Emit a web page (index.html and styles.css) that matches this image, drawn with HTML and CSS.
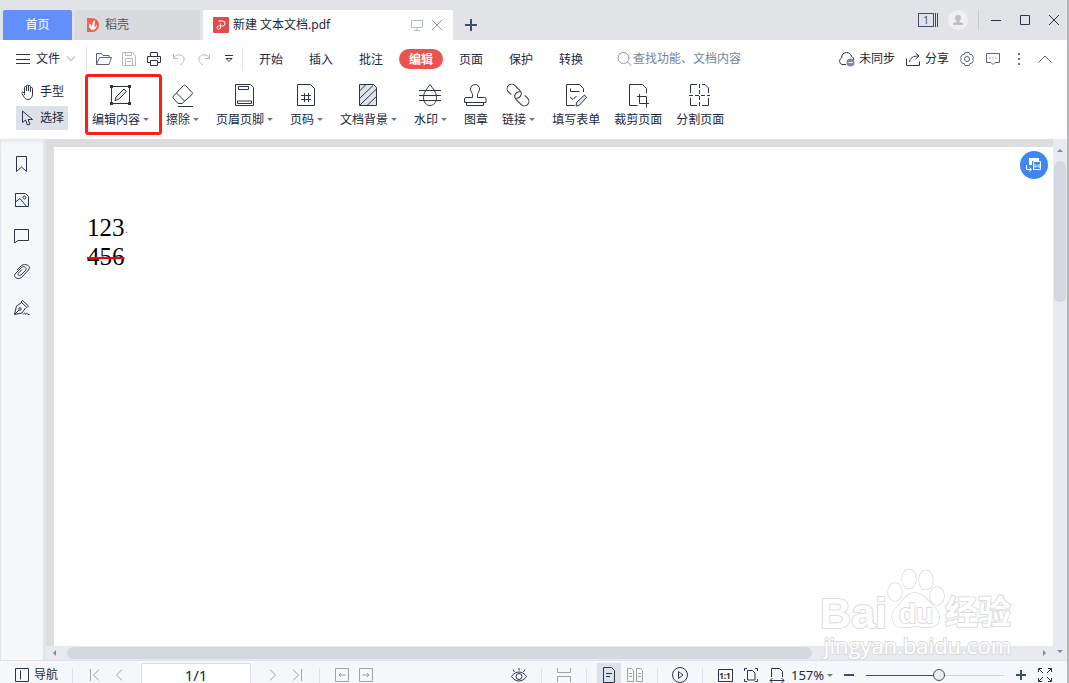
FILE: index.html
```html
<!DOCTYPE html>
<html lang="zh-CN">
<head>
  <meta charset="UTF-8">
  <meta name="viewport" content="width=device-width, initial-scale=1.0">
  <title>新建 文本文档.pdf</title>
  <link rel="stylesheet" href="styles.css">
</head>
<body>
  <header class="titlebar">
    <button class="tab home">首页</button>
    <button class="tab docer">
      <svg width="14" height="16" viewBox="0 0 14 16"><path d="M1 1h4c5 0 8 3 8 7s-3 7-7 7H1z" fill="#f2604f"/><path d="M6.500 13C3 11.500 2.500 9 3.500 6.500c1.500 1 2.300 2.500 2.500 4C6 7.500 6.500 5 8.500 3c.8 3 .5 5-.5 7.500 1-.5 2-1.500 3-3 .3 3-1.500 5-4.500 5.500z" fill="#fff"/></svg>
      稻壳
    </button>
    <div class="tab file">
      <svg width="16" height="16" viewBox="0 0 16 16"><rect width="16" height="16" rx="1" fill="#e44a4a"/><path d="M5.500 4h4a2.500 2.500 0 0 1 0 5H7.500M7.500 6.500v4a1.700 1.700 0 1 1-1.700-1.700h1.700" fill="none" stroke="#fff"/></svg>
      <span class="name">新建 文本文档.pdf</span>
      <svg class="line pale" width="12" height="12" viewBox="0 0 12 12"><path d="M.5 1.500h11v7H.5zM6 8.500v3M3 11.500h6"/></svg>
      <button class="icon small" aria-label="关闭标签"><svg class="line soft" width="12" height="12" viewBox="0 0 12 12"><path d="M1 1l10 10M11 1L1 11"/></svg></button>
    </div>
    <button class="icon add" aria-label="新建标签"><svg class="line thick" width="12" height="12" viewBox="0 0 12 12"><path d="M6 0v12M0 6h12"/></svg></button>
    <div class="window">
      <button class="icon pages-open" aria-label="窗口"><span>1</span></button>
      <button class="avatar" aria-label="登录"><svg width="20" height="20" viewBox="0 0 20 20"><circle cx="10" cy="10" r="10" fill="#f0f0f0"/><circle cx="10" cy="8" r="3" fill="#bfbfbf"/><path d="M8.500 10h3v2l3.500 1.200V15H5v-1.800L8.500 12z" fill="#bfbfbf"/></svg></button>
      <i class="rule tall"></i>
      <button class="icon" aria-label="最小化"><svg class="line" width="12" height="12" viewBox="0 0 12 12"><path d="M1 6.500h10"/></svg></button>
      <button class="icon" aria-label="最大化"><svg class="line" width="12" height="12" viewBox="0 0 12 12"><path d="M1.500 1.500h9v9h-9z"/></svg></button>
      <button class="icon" aria-label="关闭"><svg class="line" width="12" height="12" viewBox="0 0 12 12"><path d="M1 1l10 10M11 1L1 11"/></svg></button>
    </div>
  </header>

  <nav class="menubar">
    <button class="file-menu">
      <svg class="line" width="14" height="12" viewBox="0 0 14 12"><path d="M0 1.500h14M0 6.500h14M0 10.500h14"/></svg>
      文件
      <svg class="line soft" width="10" height="6" viewBox="0 0 10 6"><path d="M1 .5l4 4 4-4"/></svg>
    </button>
    <i class="rule"></i>
    <div class="quick">
      <button class="icon" aria-label="打开"><svg class="line mid" width="18" height="14" viewBox="0 0 18 14"><path d="M1.500 12.500v-11h5l1.500 2h6v2M1.500 12.500l3-7h12l-2.500 7z"/></svg></button>
      <button class="icon" aria-label="保存"><svg class="line off" width="14" height="14" viewBox="0 0 14 14"><path d="M.5.5h10l3 3v10H.5zM3.500.5v3h6v-3M3.500 13.500v-7h7v7M5 9.500h4"/></svg></button>
      <button class="icon" aria-label="打印"><svg class="line" width="14" height="14" viewBox="0 0 14 14"><path d="M3.500 4V.5h7V4M3.500 10.500h-3V4.500h13v6h-3M3.500 8.500h7v5h-7zM10 6.500h1.500"/></svg></button>
      <button class="icon" aria-label="撤销"><svg class="line off" width="14" height="14" viewBox="0 0 14 14"><path d="M1.500 2v4.500H6M1.500 6C4 2.500 8 2 10.500 4s2.500 6-2.500 9"/></svg></button>
      <button class="icon" aria-label="恢复"><svg class="line off" width="14" height="14" viewBox="0 0 14 14"><path d="M12.500 2v4.500H8M12.500 6C10 2.500 6 2 3.500 4s-2.500 6 2.500 9"/></svg></button>
      <button class="icon" aria-label="更多"><svg class="line" width="8" height="8" viewBox="0 0 8 8"><path d="M0 .5h8M1 3.500h6L4 6.500z"/></svg></button>
    </div>
    <i class="rule"></i>
    <div class="tabs">
      <button>开始</button>
      <button>插入</button>
      <button>批注</button>
      <button class="active">编辑</button>
      <button>页面</button>
      <button>保护</button>
      <button>转换</button>
    </div>
    <label class="search">
      <svg class="line soft" width="16" height="16" viewBox="0 0 16 16"><circle cx="6.500" cy="7" r="5.500"/><path d="M10.500 11l4 4"/></svg>
      <input type="text" placeholder="查找功能、文档内容" aria-label="查找功能">
    </label>
    <div class="account">
      <button class="with-text"><svg class="line" width="17" height="16" viewBox="0 0 17 16"><path d="M8 13.500H4a3.500 3.500 0 0 1-.5-6.500C3.500 3.500 6 1.500 8.500 1.500c2.500 0 4.500 1.500 5 4 1.500.5 2.500 2 2.200 3.500"/><circle cx="12.500" cy="11.500" r="4" fill="#7d8aa8" stroke="none"/><path d="M10.500 11.500h4" stroke="#fff"/></svg>未同步</button>
      <button class="with-text"><svg class="line" width="15" height="14" viewBox="0 0 15 14"><path d="M.5 6.500v7h13V9.500M3.500 10C4 6 7 4 12.500 4M9.500 1l3.500 3-3.500 3"/></svg>分享</button>
      <button class="icon" aria-label="设置"><svg class="line mid" width="14" height="14" viewBox="0 0 14 14"><path d="M5 .5h4l.8 2 2 .2 1.700 3-1 1.300 1 1.300-1.700 3-2 .2-.8 2H5l-.8-2-2-.2-1.700-3 1-1.300-1-1.300 1.700-3 2-.2z"/><circle cx="7" cy="7" r="2.500"/></svg></button>
      <button class="icon" aria-label="反馈"><svg class="line mid" width="14" height="12" viewBox="0 0 14 12"><path d="M.5.5h13v9H9l-2 2-2-2H.5zM3.500 5h1M6.500 5h1M9.500 5h1"/></svg></button>
      <button class="icon" aria-label="更多"><svg width="2" height="12" viewBox="0 0 2 12" fill="#6b7285"><path d="M0 0h2v2H0zM0 5h2v2H0zM0 10h2v2H0z"/></svg></button>
      <button class="icon" aria-label="收起"><svg class="line mid" width="14" height="8" viewBox="0 0 14 8"><path d="M.5 7.500L7 1l6.500 6.500"/></svg></button>
    </div>
  </nav>

  <section class="toolbar">
    <div class="pointer">
      <button><svg class="line" width="14" height="16" viewBox="0 0 14 16"><path d="M3.500 9V3.500a1 1 0 0 1 2 0V7 2a1 1 0 0 1 2 0v5-4.500a1 1 0 0 1 2 0V8 4.500a1 1 0 0 1 2 0V10c0 3-1.500 5.500-4.500 5.500-2.500 0-3.500-1.500-4.500-3.500L1 9.500c-.5-1.500 1-2 2.500 0V11"/></svg>手型</button>
      <button class="on"><svg class="line" width="14" height="16" viewBox="0 0 14 16"><path d="M1.500 1v11.500L4.500 10l2 5 2.500-1-2-4.500h4.500z"/></svg>选择</button>
    </div>
    <div class="tools">
      <button class="drop marked"><svg class="line" width="28" height="28" viewBox="0 0 28 28"><path d="M5.500 5.500h18v17h-18z"/><path class="tint" d="M9 19.500l1-3.500 8-8 2.500 2.500-8 8z"/><path class="dot" d="M4 4h3v3H4zM22 4h3v3h-3zM4 21h3v3H4zM22 21h3v3h-3z"/></svg><span>编辑内容</span></button>
      <button class="drop"><svg class="line" width="28" height="28" viewBox="0 0 28 28"><path d="M5.500 15l10-10.500a1.500 1.500 0 0 1 2 0l6.500 7a1.500 1.500 0 0 1 0 2L14 22.500h-4l-4.500-5a1.800 1.800 0 0 1 0-2.500zM8.500 12l8 8M10 25.500h15"/></svg><span>擦除</span></button>
      <button class="drop"><svg class="line" width="28" height="28" viewBox="0 0 28 28"><path d="M5.500 3.500h15l3 3v18h-18z"/><path d="M8.500 5.500h10v3h-10zM7.500 20h14v2.500h-14z"/></svg><span>页眉页脚</span></button>
      <button class="drop"><svg class="line" width="28" height="28" viewBox="0 0 28 28"><path d="M5.500 3.500h13l4 4v17h-17zM9 14.500h10M9 18.500h10M12.500 12v9M16.500 12v9"/></svg><span>页码</span></button>
      <button class="drop"><svg class="line" width="28" height="28" viewBox="0 0 28 28"><path class="tint" d="M5.500 3.500h14l3 3v18h-17z"/><path d="M5.500 10l6.500-6.500M5.500 17.500L19 4.500M5.500 24.500L22.500 8M13 24.500l9.500-9"/></svg><span>文档背景</span></button>
      <button class="drop"><svg class="line" width="28" height="28" viewBox="0 0 28 28"><path d="M14 3.500c-3 4-6.500 8-6.500 13 0 5 3 8 6.500 8s6.500-3 6.500-8c0-5-3.500-9-6.500-13zM3 9.500h22M3 14.500h22M3 19.500h22"/></svg><span>水印</span></button>
      <button><svg class="line" width="28" height="28" viewBox="0 0 28 28"><path d="M11.500 16.500v-3c0-1-2-3-2-5.500a4.500 4.500 0 0 1 9 0c0 2.500-2 4.500-2 5.500v3h7a1.500 1.500 0 0 1 1.500 1.500v3.500H3.500V18A1.500 1.500 0 0 1 5 16.500zM5.500 21.500v3h17v-3"/></svg><span>图章</span></button>
      <button class="drop"><svg class="line" width="28" height="28" viewBox="0 0 28 28"><g transform="rotate(45 14 14)"><path d="M9 18.500H5a4.500 4.500 0 0 1 0-9h7a4.500 4.500 0 0 1 3 8M19 9.500h4a4.500 4.500 0 0 1 0 9h-7a4.500 4.500 0 0 1-3-8"/></g></svg><span>链接</span></button>
      <button><svg class="line" width="28" height="28" viewBox="0 0 28 28"><path d="M22.500 11V7.500l-4-4h-13v21h8M9.500 7.500v3h9M9 16l3 2.500 3.500-3.500"/><path class="tint" d="M15 25l.5-3.500 8-7.500 2 2.500-7.500 8z"/></svg><span>填写表单</span></button>
      <button><svg class="line" width="28" height="28" viewBox="0 0 28 28"><path d="M23.500 12V7.500l-4-4h-13v21h8M16.500 13v9.500H26M14 15.500h9.500v11"/></svg><span>裁剪页面</span></button>
      <button><svg class="line" width="28" height="28" viewBox="0 0 28 28"><path d="M12 3.500H5.500V12M12 24.500H5.500V17M17 3.500h3l3.500 3.500v5M17 24.500h6.500V17"/><path stroke-dasharray="4 2" d="M14.500 3v22M4 14.500h21"/></svg><span>分割页面</span></button>
    </div>
  </section>

  <main class="workspace">
    <aside class="sidebar">
      <button aria-label="书签"><svg class="line" width="16" height="16" viewBox="0 0 16 16"><path d="M2.500.5h10v15l-5-4.500-5 4.500z"/></svg></button>
      <button aria-label="缩略图"><svg class="line" width="16" height="16" viewBox="0 0 16 16"><path d="M1.500 1.500h10l3 3v10h-13zM1.500 10L6 6.500l6.500 8"/><circle cx="10.500" cy="5.500" r="1.500"/></svg></button>
      <button aria-label="批注"><svg class="line" width="16" height="16" viewBox="0 0 16 16"><path d="M.5 1.500h14v11H4L.5 15z"/></svg></button>
      <button aria-label="附件"><svg class="line" width="16" height="16" viewBox="0 0 16 16"><path d="M3 6l4-4c3-3 11-1 7.500 4L8 13c-3 3-9 1-7-3l6.500-6.500c2.500-2 6 0 4 3L7 11c-1.500 1.500-4 0-2.500-2L8 5.500"/></svg></button>
      <button aria-label="签名"><svg class="line" width="16" height="16" viewBox="0 0 16 16"><path d="M8.500.5l6 5.500-1.500 1.500-6-5.500zM7 3L2.500 6 .5 14.500 8 13l3.500-5M.5 14.500L5 10M9 14.500c1.500-2 2-2 2.500 0 1-1.500 2-1.500 2.500 0h1.500"/><circle cx="6" cy="9" r="1.200"/></svg></button>
    </aside>
    <div class="viewer">
      <div class="page">
        <p>123<span class="mark">·</span></p>
        <p><del>456</del></p>
        <button class="convert" aria-label="转为Word"><svg width="16" height="16" viewBox="0 0 16 16" fill="none" stroke="#fff"><path d="M3 1h10v3H6v4H3z" fill="#fff" stroke="none"/><path d="M7.500 4.500h7v8h-7zM9 7v3.500l2-2 2 2V7M.5 8v4.500H5M3.500 10.500l2 2-2 2"/></svg></button>
        <div class="watermark">
          <div class="brand">
            <span class="latin">Bai</span>
            <span class="paw"><svg width="58" height="62" viewBox="0 0 58 62" fill="#fff" stroke="#d8d8d8" stroke-width="1.500"><ellipse cx="8" cy="24" rx="7" ry="9"/><ellipse cx="22" cy="11" rx="7" ry="9.500"/><ellipse cx="39" cy="12" rx="7" ry="9.500"/><ellipse cx="50" cy="28" rx="7" ry="9"/><path d="M28 25c-9 0-11 7-16 12-6 5-8 10-6 16 2 7 9 7 15 6 5-1 10-1 15 0 7 1 14 0 16-7 1-6-2-10-7-15-5-5-8-12-17-12z"/></svg><b>du</b></span>
            <span class="han">经验</span>
          </div>
          <div class="site">jingyan.baidu.com</div>
        </div>
      </div>
      <div class="vbar"><i class="up"></i><i class="thumb"></i><i class="down"></i></div>
      <div class="hbar"><i class="left"></i><i class="thumb"></i><i class="right"></i></div>
    </div>
  </main>

  <footer class="status">
    <button class="navigate"><svg class="line" width="16" height="16" viewBox="0 0 16 16"><path d="M1.500 1.500h13v13h-13zM6.500 3.500v9"/></svg>导航</button>
    <i class="rule"></i>
    <button class="icon" aria-label="第一页"><svg class="line off" width="12" height="14" viewBox="0 0 12 14"><path d="M1.500 1v12M10 1.500L4.500 7l5.500 5.500"/></svg></button>
    <button class="icon" aria-label="上一页"><svg class="line off" width="12" height="14" viewBox="0 0 12 14"><path d="M9 1.500L3.500 7 9 12.500"/></svg></button>
    <input class="page-no" type="text" value="1/1" aria-label="页码">
    <button class="icon" aria-label="下一页"><svg class="line off" width="12" height="14" viewBox="0 0 12 14"><path d="M3 1.500L8.500 7 3 12.500"/></svg></button>
    <button class="icon" aria-label="最后一页"><svg class="line off" width="12" height="14" viewBox="0 0 12 14"><path d="M10.500 1v12M2 1.500L7.500 7 2 12.500"/></svg></button>
    <i class="rule"></i>
    <button class="icon" aria-label="后退"><svg class="line off" width="14" height="14" viewBox="0 0 14 14"><path d="M.5.5h13v13H.5zM4 7h6.500M6 5L4 7l2 2"/></svg></button>
    <button class="icon" aria-label="前进"><svg class="line off" width="14" height="14" viewBox="0 0 14 14"><path d="M.5.5h13v13H.5zM3.500 7H10M8 5l2 2-2 2"/></svg></button>
    <div class="view">
      <button class="icon" aria-label="护眼模式"><svg class="line" width="16" height="16" viewBox="0 0 16 16"><path d="M.5 9.500c4-6 11-6 15 0-4 6-11 6-15 0zM8 1v2.500M2 2.500L3.500 5M14 2.500L12.500 5"/><circle cx="8" cy="9.500" r="3"/></svg></button>
      <i class="rule"></i>
      <button class="icon" aria-label="连续"><svg class="line off" width="14" height="14" viewBox="0 0 14 14"><path d="M.5 0v4.500h13V0M.5 14V8.500h13V14"/></svg></button>
      <i class="rule"></i>
      <div class="pair">
        <button class="icon on" aria-label="单页"><svg class="line" width="14" height="16" viewBox="0 0 14 16"><path d="M1.500.500h8l3 3v12h-11zM4 6.500h6M4 9.500h4"/></svg></button>
        <button class="icon" aria-label="双页"><svg class="line off" width="16" height="14" viewBox="0 0 16 14"><path d="M.5.500h4l2 2v11h-6zM9.500.500h4l2 2v11h-6zM2 5.500h3M2 8.500h3M11 5.500h3M11 8.500h3"/></svg></button>
      </div>
      <i class="rule"></i>
      <button class="icon" aria-label="放映"><svg class="line" width="16" height="16" viewBox="0 0 16 16"><circle cx="8" cy="8" r="7.500"/><path d="M6.500 4.500v7l4.500-3.500z"/></svg></button>
      <i class="rule"></i>
      <div class="pair">
        <button class="icon actual" aria-label="实际大小"><span>1:1</span></button>
        <button class="icon" aria-label="适合页面"><svg class="line" width="14" height="16" viewBox="0 0 14 16"><path d="M.5 4V1.500H3M11 1.500h2.500V4M.5 12v2.500H3M11 14.500h2.500V12M3.500 3.500h5l2.500 2.500v7H3.500z"/></svg></button>
        <button class="icon" aria-label="适合宽度"><svg class="line" width="16" height="16" viewBox="0 0 16 16"><path d="M2.500 10V1.500h8l3 3V10M1 13.500h14M3.500 11L1 13.500 3.500 16M12.500 11l2.500 2.500-2.500 2.500"/></svg></button>
        <span class="percent"><select aria-label="缩放比例"><option>157%</option></select></span>
      </div>
      <button class="icon" aria-label="缩小"><svg class="line thick" width="12" height="12" viewBox="0 0 12 12"><path d="M1 6h10"/></svg></button>
      <input class="zoom" type="range" min="0" max="100" value="53" aria-label="缩放">
      <button class="icon" aria-label="放大"><svg class="line thick" width="12" height="12" viewBox="0 0 12 12"><path d="M1 6h10M6 1v10"/></svg></button>
      <button class="icon" aria-label="全屏"><svg class="line" width="14" height="14" viewBox="0 0 14 14"><path d="M.5 4V.5H4M.5.5L5 5M10 .5h3.500V4M13.500.5L9 5M.5 10v3.500H4M.5 13.500L5 9M10 13.500h3.500V10M13.500 13.500L9 9"/></svg></button>
    </div>
  </footer>
</body>
</html>
```
FILE: styles.css
```css
* {
  box-sizing: border-box;
}
body {
  margin: 0;
  height: 100vh;
  display: flex;
  flex-direction: column;
  overflow: hidden;
  border-right: 2px solid #b4b6b8;
  background: #fff;
  color: #20283a;
  font-family: "Noto Sans", "Noto Sans CJK SC", sans-serif;
  font-size: 12px;
  line-height: 16px;
}
button, input, select {
  margin: 0;
  padding: 0;
  border: none;
  background: none;
  color: inherit;
  font: inherit;
}
button {
  flex: none;
  white-space: nowrap;
}
svg {
  display: block;
  flex: none;
}
.line {
  fill: none;
  stroke: #2b3448;
}
.line.mid {
  stroke: #5c6478;
}
.line.soft {
  stroke: #8b95ab;
}
.line.pale {
  stroke: #b0b8cc;
}
.line.off {
  stroke: #b4b7bd;
}
.status .off {
  stroke: #9da0a6;
}
.line.thick {
  stroke: #3f4c6b;
  stroke-width: 2;
}
.dot {
  fill: #2b3448;
  stroke: none;
}
.tint {
  fill: #dfe2e6;
}
.icon {
  width: 24px;
  height: 24px;
  display: flex;
  align-items: center;
  justify-content: center;
}
.rule {
  flex: none;
  width: 1px;
  height: 24px;
  background: #dfe1e8;
}

/* title bar */
.titlebar {
  flex: none;
  height: 40px;
  display: flex;
  align-items: flex-end;
  gap: 3px;
  padding-left: 3px;
  background: #e2e3e7;
}
.tab {
  height: 30px;
  display: flex;
  align-items: center;
  border-radius: 2px 2px 0 0;
}
.home {
  width: 69px;
  justify-content: center;
  background: #638ffb;
  color: #fff;
}
.docer {
  width: 125px;
  gap: 5px;
  padding-left: 11px;
  background: #d9dadd;
  color: #50545c;
}
.file {
  width: 250px;
  gap: 4px;
  padding: 0 6px 0 10px;
  background: #fff;
}
.name {
  flex: 1;
}
.small {
  width: 20px;
}
.add {
  height: 30px;
  margin-left: 3px;
}
.window {
  margin-left: auto;
  height: 40px;
  display: flex;
  align-items: center;
  gap: 5px;
  padding-right: 1px;
}
.pages-open span {
  width: 16px;
  height: 14px;
  border: 1px solid #3f4c6b;
  font-size: 10px;
  line-height: 12px;
  color: #3f4c6b;
  box-shadow: 1px 0 #e2e3e7, 2px 0 #3f4c6b, 3px 0 #e2e3e7, 4px 0 #3f4c6b;
}
.window .avatar {
  margin: 0 5px;
}
.rule.tall {
  height: 20px;
  background: #c9cbd0;
}

/* menu row */
.menubar {
  flex: none;
  height: 38px;
  display: flex;
  align-items: center;
}
.file-menu {
  display: flex;
  align-items: center;
  gap: 6px;
  padding: 0 10px 0 16px;
}
.quick {
  display: flex;
  gap: 1px;
  padding: 0 1px 0 5px;
}
.quick + .rule {
  margin: 0 6px 0 0;
}
.tabs {
  display: flex;
  gap: 6px;
}
.tabs button {
  width: 44px;
  height: 20px;
  padding-top: 1px;
  border-radius: 10px;
}
.tabs .active {
  background: #ea5350;
  color: #fff;
  font-weight: bold;
}
.search {
  display: flex;
  align-items: center;
  padding-left: 24px;
}
.search input {
  width: 120px;
}
.search input::placeholder {
  color: #747f98;
  opacity: 1;
}
.account {
  margin-left: auto;
  display: flex;
  align-items: center;
  gap: 2px;
  padding-right: 10px;
}
.with-text {
  display: flex;
  align-items: center;
  gap: 4px;
  padding-right: 9px;
}
.with-text + .icon {
  margin-left: -5px;
}

/* toolbar */
.toolbar {
  flex: none;
  height: 61px;
  display: flex;
}
.pointer {
  width: 82px;
  padding: 2px 0 0 16px;
  border-right: 1px solid #eceef1;
}
.pointer button {
  width: 52px;
  height: 24px;
  margin-bottom: 2px;
  display: flex;
  align-items: center;
  gap: 5px;
  padding-left: 5px;
}
.pointer .on {
  background: #dde2e8;
}
.tools {
  display: flex;
  align-items: flex-start;
  padding: 3px 0 0 10px;
}
.tools button {
  position: relative;
  display: flex;
  flex-direction: column;
  align-items: center;
  gap: 3px;
  margin-right: 14px;
}
.tools svg {
  margin: 0 -1px 0 -3px;
}
.tools .drop {
  margin-right: 17px;
}
.drop span::after,
.percent::after {
  content: "";
  display: inline-block;
  margin-left: 3px;
  vertical-align: 3px;
  border: 3px solid transparent;
  border-top-color: #6f7a92;
  border-bottom: none;
}
.marked::before {
  content: "";
  position: absolute;
  inset: -7px -13px -7px -7px;
  border: 3px solid #fb2111;
  border-radius: 3px;
}

/* document */
.workspace {
  flex: 1;
  min-height: 0;
  display: flex;
}
.sidebar {
  flex: none;
  width: 46px;
  display: flex;
  flex-direction: column;
  align-items: center;
  gap: 12px;
  padding-top: 13px;
  background: #f5f7fa;
  border-left: 1px solid #e3e5ea;
  border-right: 3px solid #e3e5ea;
  box-shadow: inset 0 4px 4px -3px #d8dadd;
}
.sidebar button {
  width: 24px;
  height: 24px;
  display: flex;
  align-items: center;
  justify-content: center;
}
.viewer {
  flex: 1;
  display: grid;
  grid-template-columns: 1fr 14px;
  grid-template-rows: 1fr 14px;
  background: #dcdddf;
}
.page {
  position: relative;
  margin: 8px 0 0 8px;
  padding: 66px 33px;
  background: #fff;
  color: #000;
  font-family: "Liberation Serif", serif;
  font-size: 25px;
  line-height: 29px;
}
.page p {
  margin: 0;
}
.page del {
  text-decoration: line-through 2px #f00;
}
.mark {
  color: #e33;
  font-size: 12px;
  line-height: 12px;
}
.convert {
  position: absolute;
  top: 4px;
  right: 5px;
  width: 28px;
  height: 28px;
  padding: 6px;
  border-radius: 50%;
  background: #3f86f0;
}
.vbar, .hbar {
  display: flex;
  align-items: center;
  background: #e8eaf0;
}
.vbar {
  flex-direction: column;
  grid-row: 1 / 3;
  grid-column: 2;
  padding: 10px 0 7px;
}
.hbar {
  grid-column: 1;
  grid-row: 2;
  padding: 0 7px;
}
.thumb {
  border-radius: 6px;
  background: #d5d8e0;
}
.vbar .thumb {
  width: 12px;
  height: 28%;
  margin: 9px 0 auto;
}
.hbar .thumb {
  width: 75%;
  height: 12px;
  margin: 0 auto 0 11px;
}
.up, .down, .left, .right {
  border: 3px solid transparent;
}
.up {
  border-top: none;
  border-bottom-color: #7d8aa8;
}
.down {
  border-bottom: none;
  border-top-color: #7d8aa8;
}
.left {
  border-left: none;
  border-right-color: #7d8aa8;
}
.right {
  border-right: none;
  border-left-color: #7d8aa8;
}
.watermark {
  position: absolute;
  right: 42px;
  bottom: -14px;
  z-index: 1;
  color: #fff;
  font-family: "Liberation Sans", "Noto Sans CJK SC", sans-serif;
  -webkit-text-stroke: 2px #dcdcdc;
  paint-order: stroke;
}
.brand {
  display: flex;
  align-items: flex-end;
  font-weight: bold;
}
.latin {
  font-size: 43px;
  line-height: 33px;
}
.paw {
  position: relative;
}
.paw b {
  position: absolute;
  left: 0;
  right: 0;
  bottom: 2px;
  text-align: center;
  font-size: 28px;
  line-height: 28px;
}
.han {
  font-size: 33px;
  line-height: 34px;
}
.site {
  font-family: "Open Sans", sans-serif;
  font-size: 22px;
  line-height: 30px;
  text-align: right;
}

/* status bar */
.status {
  flex: none;
  height: 23px;
  display: flex;
  align-items: flex-start;
  padding-top: 2px;
  border-top: 1px solid #e0e2e7;
  background: #f5f7fa;
}
.status .rule {
  height: 15px;
  margin: 5px 10px 0;
}
.navigate {
  height: 24px;
  display: flex;
  align-items: center;
  gap: 4px;
  padding: 0 4px 0 14px;
}
.page-no {
  width: 110px;
  height: 24px;
  margin: 0 10px;
  border: 1px solid #dadce1;
  border-radius: 2px;
  background: #fff;
  text-align: center;
  font-size: 15px;
}
.view {
  margin-left: auto;
  display: flex;
  padding-right: 10px;
}
.pair {
  display: flex;
  gap: 2px;
}
.status .on {
  background: #dde1e9;
}
.actual span {
  width: 15px;
  height: 13px;
  border: 1px solid #2b3448;
  font-size: 8px;
  font-weight: bold;
  line-height: 11px;
}
.percent {
  display: flex;
  align-items: center;
  height: 24px;
  margin-right: 4px;
}
.percent select {
  appearance: none;
  width: 33px;
  font-size: 13px;
}
.zoom {
  appearance: none;
  width: 138px;
  height: 24px;
  margin: 0 5px;
  background: linear-gradient(to right, #3f4c6b 53%, #d0d3d8 53%) center / 100% 1px no-repeat;
}
.zoom::-webkit-slider-thumb {
  appearance: none;
  width: 12px;
  height: 12px;
  border: 1px solid #4a4f5a;
  border-radius: 50%;
  background: #ececec;
}
```
